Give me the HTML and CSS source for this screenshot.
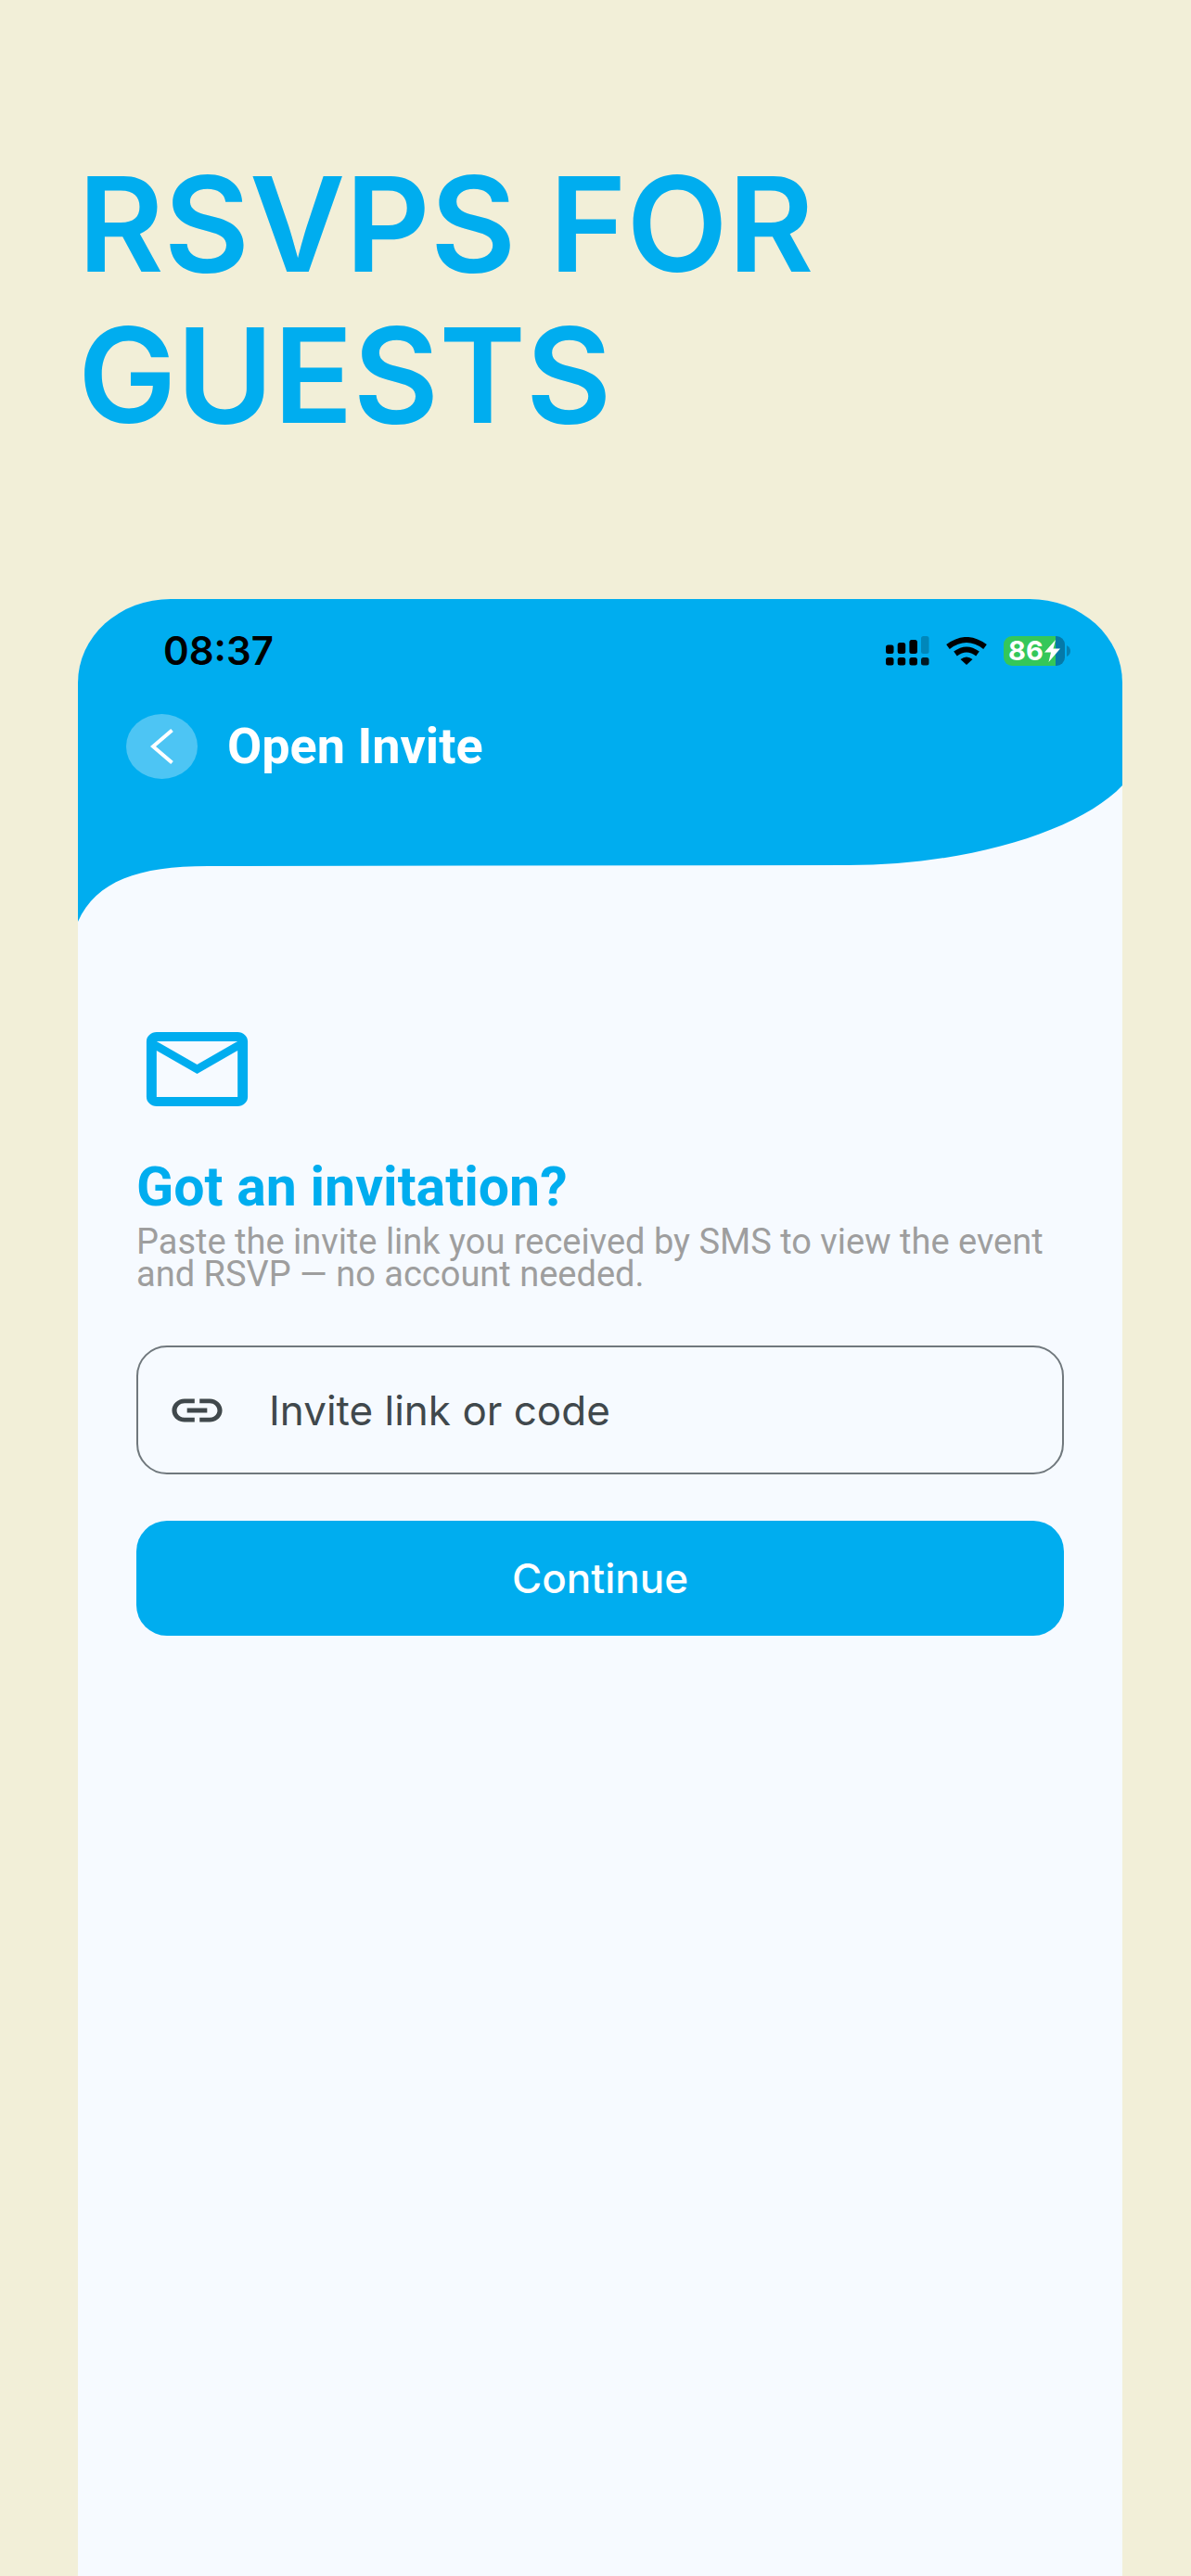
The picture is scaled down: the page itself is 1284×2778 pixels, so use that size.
FILE: index.html
```html
<!DOCTYPE html>
<html lang="en">
<head>
    <meta charset="UTF-8">
    <meta name="viewport" content="width=device-width, initial-scale=1.0">
    <title>Open Invite</title>
    <link rel="stylesheet" href="styles.css">
</head>
<body>
    <h1 class="headline">RSVPS FOR GUESTS</h1>

    <div class="phone">
        <header class="header">
            <svg class="wave" viewBox="0 0 1126 348" preserveAspectRatio="none">
                <path fill="#00adef" d="M0 0H1126V201C1080 250 960 287 830 287L140 288C65 288 20 304 0 348Z"/>
            </svg>
            <div class="status">
                <span class="time">08:37</span>
                <div class="status-icons">
                    <svg width="47" height="32" viewBox="0 0 47 32">
                        <rect x="0" y="9.500" width="8.500" height="9.500" rx="2.500"/>
                        <rect x="12.700" y="7" width="8.500" height="12" rx="2.500"/>
                        <rect x="25.400" y="4" width="8.500" height="15" rx="2.500"/>
                        <rect x="38" y="0" width="8.500" height="19" rx="2.500" opacity=".22"/>
                        <rect x="0" y="23" width="8.500" height="8.500" rx="2.500"/>
                        <rect x="12.700" y="23" width="8.500" height="8.500" rx="2.500"/>
                        <rect x="25.400" y="23" width="8.500" height="8.500" rx="2.500"/>
                        <rect x="38" y="23" width="8.500" height="8.500" rx="2.500" opacity=".85"/>
                    </svg>
                    <svg width="44" height="30" viewBox="0 0 44 30">
                        <path fill="none" stroke="#000" stroke-width="6" d="M2 10.500Q22 -4.500 42 10.500M10 18Q22 9 34 18"/>
                        <path d="M15.500 24Q22 19 28.500 24L22 30Z"/>
                    </svg>
                    <div class="battery">
                        <span class="level">86</span>
                        <svg class="bolt" width="17" height="24" viewBox="0 0 17 24">
                            <path fill="#fff" d="M12 0L0 13.500H7L4.500 24L17 9.500H9.500Z"/>
                        </svg>
                        <svg class="cap" width="4" height="12" viewBox="0 0 4 12">
                            <path fill="#0582b3" d="M0 0Q4 2 4 6T0 12Z"/>
                        </svg>
                    </div>
                </div>
            </div>
            <div class="navbar">
                <button class="back" aria-label="Back">
                    <svg width="26" height="38" viewBox="0 0 26 38">
                        <path fill="none" stroke="#fff" stroke-width="4" d="M23.500 1.500L3 19L23.500 36.500"/>
                    </svg>
                </button>
                <h2 class="title">Open Invite</h2>
            </div>
        </header>

        <main class="content">
            <svg class="mail" width="131" height="120" viewBox="0 0 24 24" preserveAspectRatio="none">
                <path fill="#00adef" d="M22 6c0-1.100-.9-2-2-2H4c-1.100 0-2 .9-2 2v12c0 1.100.9 2 2 2h16c1.100 0 2-.9 2-2V6zm-2 0l-8 5-8-5h16zm0 12H4V8l8 5 8-5v10z"/>
            </svg>
            <h3 class="question">Got an invitation?</h3>
            <p class="hint">Paste the invite link you received by SMS to view the event and RSVP — no account needed.</p>
            <form>
                <label class="field">
                    <svg width="65" height="60" viewBox="0 0 24 24" preserveAspectRatio="none">
                        <path fill="#40484c" d="M3.900 12c0-1.710 1.390-3.100 3.100-3.100h4V7H7c-2.760 0-5 2.240-5 5s2.240 5 5 5h4v-1.900H7c-1.710 0-3.100-1.390-3.100-3.100zM8 13h8v-2H8v2zm9-6h-4v1.900h4c1.710 0 3.100 1.390 3.100 3.100s-1.390 3.100-3.100 3.100h-4V17h4c2.760 0 5-2.240 5-5s-2.240-5-5-5z"/>
                    </svg>
                    <input type="text" placeholder="Invite link or code" aria-label="Invite link or code">
                </label>
                <button class="continue" type="button">Continue</button>
            </form>
        </main>
    </div>
</body>
</html>
```

FILE: styles.css
```css
* {
    box-sizing: border-box;
}
body {
    margin: 0;
    min-height: 100vh;
    display: flex;
    flex-direction: column;
    background-color: #f2efd8;
    font-family: Roboto, sans-serif;
}
h1, h2, h3, p {
    margin: 0;
}
.headline {
    max-width: 1100px;
    padding: 160px 84px 0;
    font-family: Inter, sans-serif;
    font-size: 142px;
    font-weight: 600;
    line-height: 163px;
    color: #00adef;
}
.phone {
    flex: 1;
    margin: 160px 74px 0 84px;
    border-radius: 100px 100px 0 0 / 90px 90px 0 0;
    background-color: #f6faff;
    overflow: hidden;
}
.header {
    position: relative;
    height: 348px;
}
.wave {
    position: absolute;
    width: 100%;
    height: 100%;
}
.status {
    position: relative;
    display: flex;
    justify-content: space-between;
    align-items: center;
    padding: 36px 57px 0 92px;
}
.time {
    font-family: Inter, sans-serif;
    font-size: 42px;
    font-weight: 600;
    line-height: 40px;
}
.status-icons {
    display: flex;
    align-items: center;
    gap: 18px;
}
.battery {
    position: relative;
    display: flex;
    align-items: center;
    width: 66px;
    height: 32px;
    margin-right: 5px;
    padding-left: 5px;
    border-radius: 9px;
    background: linear-gradient(to right, #34c759 56px, #0479a8 56px);
}
.level {
    font-family: Inter, sans-serif;
    font-size: 29px;
    font-weight: 700;
    line-height: 32px;
    color: #fff;
}
.bolt {
    margin-left: 1px;
}
.cap {
    position: absolute;
    left: 68px;
}
.navbar {
    position: relative;
    display: flex;
    align-items: center;
    gap: 32px;
    padding: 48px 52px 0;
}
.back {
    display: flex;
    align-items: center;
    justify-content: center;
    width: 77px;
    height: 70px;
    padding: 0;
    border: none;
    border-radius: 50%;
    background-color: rgba(255, 255, 255, .3);
}
.title {
    font-size: 54px;
    line-height: 60px;
    color: #fff;
}
.content {
    padding: 99px 63px;
}
.mail {
    display: block;
}
.question {
    margin-top: 35px;
    font-size: 59px;
    line-height: 64px;
    color: #00adef;
}
.hint {
    margin-top: 10px;
    font-size: 38px;
    line-height: 35px;
    color: #9e9e9e;
}
.field {
    display: flex;
    align-items: center;
    gap: 45px;
    height: 139px;
    margin-top: 59px;
    padding: 0 31px;
    border: 2px solid #70787d;
    border-radius: 33px;
}
.field input {
    flex: 1;
    min-width: 0;
    padding: 0;
    border: none;
    outline: none;
    background: none;
    font-family: Inter, sans-serif;
    font-size: 44px;
}
.field input::placeholder {
    color: #40484c;
    opacity: 1;
}
.continue {
    width: 100%;
    height: 124px;
    margin-top: 50px;
    border: none;
    border-radius: 33px;
    background-color: #00adef;
    color: #fff;
    font-family: Inter, sans-serif;
    font-size: 44px;
    font-weight: 500;
}
```
